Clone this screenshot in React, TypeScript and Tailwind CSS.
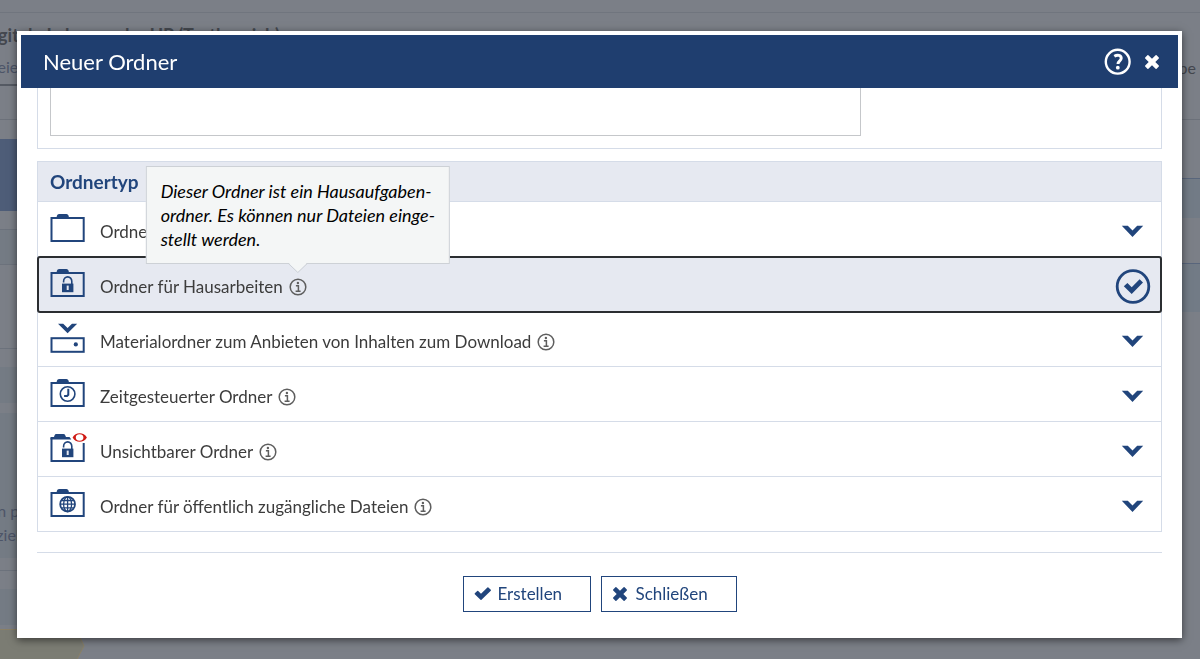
import type { ReactNode } from "react";

function Folder({ children }: { children?: ReactNode }) {
  return (
    <svg className="h-10 w-9.5 shrink-0" viewBox="0 0 38 40" fill="none" aria-hidden="true">
      <path d="M6.5 6.5 7 4.6Q7.4 3 9 3h7.5Q18 3 18.5 4.6L19 6.5z" fill="#21457c" />
      <rect x="1.5" y="7" width="32.2" height="23" stroke="#21457c" strokeWidth="2" />
      {children}
    </svg>
  );
}

function Lock() {
  return (
    <g>
      <path d="M13.6 16.5v-1.3a4.1 4.3 0 0 1 8.2 0V18" stroke="#21457c" strokeWidth="1.6" fill="none" />
      <rect x="12" y="17.6" width="11.4" height="8.6" fill="#21457c" />
      <rect x="16.7" y="19.6" width="2" height="4.4" fill="#e6e9f1" />
    </g>
  );
}

function LockFolder() {
  return (
    <Folder>
      <Lock />
    </Folder>
  );
}

function TrayIcon() {
  return (
    <svg className="h-10 w-9.5 shrink-0" viewBox="0 0 38 40" fill="none" aria-hidden="true">
      <path d="M8 2.8h5.2L17.6 7.1 22 2.8h5.2L17.6 12.3z" fill="#21457c" />
      <rect x="1.5" y="17.2" width="32.2" height="13.6" stroke="#21457c" strokeWidth="2" />
      <circle cx="25.8" cy="23.4" r="2.1" fill="#21457c" />
    </svg>
  );
}

function ClockFolder() {
  return (
    <Folder>
      <circle cx="17.6" cy="18" r="7.3" stroke="#21457c" strokeWidth="1.6" />
      <path d="M18.3 12.8v6l-1.2 1.2h-3" stroke="#21457c" strokeWidth="2" />
    </Folder>
  );
}

function HiddenFolder() {
  return (
    <svg className="h-10 w-9.5 shrink-0" viewBox="0 0 38 40" fill="none" aria-hidden="true">
      <path d="M.5 6H4l.6-1.8Q5 3 6.3 3h7.2q1.3 0 1.7 1.2L16 6h3.5l1.8 2.4H.5z" fill="#21457c" />
      <path d="M1.5 7v23H33.7V12" stroke="#21457c" strokeWidth="2" />
      <Lock />
      <path
        fillRule="evenodd"
        d="M22.6 6.5C24.3 3.5 26.6 2.2 29.6 2.2S35.2 3.5 36.9 6.5C35.2 9.5 32.6 10.8 29.6 10.8S24.3 9.5 22.6 6.5zM29.6 3.2C26.8 3.2 25.8 4.6 25.8 6.5S26.8 9.8 29.6 9.8 33.4 8.4 33.4 6.5 32.4 3.2 29.6 3.2z"
        fill="#cf1a14"
      />
    </svg>
  );
}

function GlobeFolder() {
  return (
    <Folder>
      <g stroke="#21457c" strokeWidth="1.3">
        <circle cx="17.6" cy="18.2" r="7.4" strokeWidth="1.8" />
        <ellipse cx="17.6" cy="18.2" rx="4" ry="7.4" />
        <path d="M17.6 11v15M10.3 18.2h14.6M11.4 14.5h12.4M11.4 21.9h12.4" />
      </g>
    </Folder>
  );
}

function Chevron() {
  return (
    <svg className="h-3 w-6" viewBox="0 0 24 12" aria-hidden="true">
      <path d="M.8 .8h6L11.5 5.4l4.7-4.6h6L11.5 12z" fill="#21457c" />
    </svg>
  );
}

function Selected() {
  return (
    <svg className="size-9" viewBox="0 0 36 36" fill="none" aria-hidden="true">
      <circle cx="18" cy="18.5" r="15.8" stroke="#21457c" strokeWidth="2.8" />
      <path d="M8.8 18.3l3.6-3.4 4.3 4.4 7.9-8 3.4 3.3L16.7 26.1z" fill="#21457c" />
    </svg>
  );
}

function Info() {
  return (
    <svg className="size-4.5" viewBox="0 0 18 18" fill="none" aria-hidden="true">
      <circle cx="9" cy="9" r="7.8" stroke="#5e5e5e" strokeWidth="1.5" />
      <circle cx="8.9" cy="5" r="1.2" fill="#5e5e5e" />
      <path d="M6.9 7.7h2.5v5.2M6.6 13.2h5" stroke="#5e5e5e" strokeWidth="1.5" />
    </svg>
  );
}

function Cross({ className }: { className: string }) {
  return (
    <svg className={className} viewBox="0 0 16 16" aria-hidden="true">
      <path
        d="M4.4 1.2 8 4.7l3.6-3.5q.5-.4 1 0l2.2 2.2q.4.5 0 1L11.3 8l3.5 3.6q.4.5 0 1l-2.2 2.2q-.5.4-1 0L8 11.3l-3.6 3.5q-.5.4-1 0L1.2 12.6q-.4-.5 0-1L4.7 8 1.2 4.4q-.4-.5 0-1L3.4 1.2q.5-.4 1 0z"
        fill="currentColor"
      />
    </svg>
  );
}

function Check() {
  return (
    <svg className="h-4 w-4.5" viewBox="0 0 18 16" aria-hidden="true">
      <path
        d="M.8 7.3 3.2 5q.5-.4 1 0L7 7.8l6.4-6.4q.5-.4 1 0l2.4 2.4q.4.5 0 1L7.5 13.8q-.5.4-1 0L.8 8.3q-.4-.5 0-1z"
        fill="currentColor"
      />
    </svg>
  );
}

type FolderType = {
  label: string;
  icon: ReactNode;
  info?: boolean;
  selected?: boolean;
};

const folderTypes: FolderType[] = [
  { label: "Ordner", icon: <Folder /> },
  { label: "Ordner für Hausarbeiten", icon: <LockFolder />, info: true, selected: true },
  { label: "Materialordner zum Anbieten von Inhalten zum Download", icon: <TrayIcon />, info: true },
  { label: "Zeitgesteuerter Ordner", icon: <ClockFolder />, info: true },
  { label: "Unsichtbarer Ordner", icon: <HiddenFolder />, info: true },
  { label: "Ordner für öffentlich zugängliche Dateien", icon: <GlobeFolder />, info: true },
];

function Tooltip() {
  return (
    <div
      role="tooltip"
      className="absolute bottom-full left-1/2 z-10 mb-3 -translate-x-1/2 border border-[#cdd1d6] bg-[#f4f6f6] px-3.5 py-3 text-left text-lg leading-6 whitespace-nowrap text-black italic"
    >
      Dieser Ordner ist ein Hausaufgaben-
      <br />
      ordner. Es können nur Dateien einge-
      <br />
      stellt werden.
      <svg className="absolute top-full left-1/2 h-2.5 w-5 -translate-x-1/2" viewBox="0 0 20 10" aria-hidden="true">
        <path d="M0 -1 10 9 20 -1z" fill="#f4f6f6" />
        <path d="M0 0 10 9.5 20 0" fill="none" stroke="#cdd1d6" />
      </svg>
    </div>
  );
}

function TypeRow({ type }: { type: FolderType }) {
  return (
    <li
      className={
        type.selected
          ? "relative flex h-[55px] items-center rounded-xs border-b border-[#d5dce8] bg-[#e6e9f1] pt-1 pr-2.5 pl-3 outline-2 -outline-offset-1 outline-[#2b2e31]"
          : "flex h-[55px] items-center border-b border-[#d5dce8] pt-1 pr-4 pl-3 last:h-[54px] last:border-b-0"
      }
    >
      <button type="button" className="flex items-center gap-3 text-left text-[17px] leading-6 text-[#3c3c3c]">
        {type.icon}
        <span className="pt-0.5">{type.label}</span>
      </button>
      {type.info && (
        <button type="button" aria-label={"Info: " + type.label} className="relative ml-1.5 pt-0.5">
          <Info />
          {type.selected && <Tooltip />}
        </button>
      )}
      <button type="button" aria-label={type.label + " auswählen"} className="ml-auto">
        {type.selected ? <Selected /> : <Chevron />}
      </button>
    </li>
  );
}

function Backdrop() {
  return (
    <div aria-hidden="true" className="flex h-screen flex-col overflow-hidden bg-[#7b7f87] text-[#4d5568]">
      <div className="h-[13px] shrink-0 border-b border-[#70757e]" />
      <div className="-ml-5 pt-2.5 text-lg leading-6 font-bold whitespace-nowrap text-[#44484f]">
        Digitale Lehre an der UP (Testbereich)
      </div>
      <div className="flex h-[73px] shrink-0 justify-between border-b border-[#6c717a] pt-2 text-base">
        <span className="-ml-7 h-[31px] border-b-2 border-[#555a63] pr-2">Dateien</span>
        <span className="pt-px pr-1 text-[#44474e]">Hilfe be</span>
      </div>
      <div className="flex min-h-0 flex-1 justify-between">
        <div className="w-24 shrink-0">
          <div className="mt-[19px] h-[72px] bg-[#4e5d78]" />
          <div className="mt-[18px] h-9 border-y border-[#6c727c] bg-[#747b84]" />
          <div className="mt-[83px] h-[19px] border-t border-[#6c727c]" />
          <div className="h-9 bg-[#747b84]" />
          <div className="mt-2.5 h-[145px] bg-[#747b84] pt-[86px] leading-6 whitespace-nowrap">
            <p className="-ml-6">dein persönlich</p>
            <p className="-ml-7">speziell</p>
          </div>
          <div className="mt-3 h-[19px] border-t border-[#6c727c]" />
          <div className="h-9 bg-[#747b84]" />
          <svg className="mt-1 h-8 w-[85px]" viewBox="0 0 85 32" preserveAspectRatio="none">
            <path d="M-1 .5H76L84 17 76 32H-1z" fill="#7b7c73" stroke="#8a8067" />
          </svg>
        </div>
        <div className="w-16">
          <div className="mt-[58px] h-10 border-t border-[#59667c] bg-[#727b86]" />
          <div className="mt-[45px] h-[49px] border-t border-[#59667c] bg-[#727b86]" />
        </div>
      </div>
    </div>
  );
}

export default function App() {
  return (
    <div className="min-h-screen font-['Lato',sans-serif]">
      <Backdrop />
      <div className="fixed inset-0 overflow-auto pt-[31px] pr-[18px] pl-[17px]">
        <div
          role="dialog"
          aria-labelledby="dialog-title"
          className="border-4 border-white bg-white shadow-[0_2px_8px_rgba(0,0,0,0.55)]"
        >
          <header className="flex h-[53px] items-center justify-between bg-[#1f3e6f] pr-4.5 pl-5.5 text-white">
            <h1 id="dialog-title" className="text-[22px] leading-7">
              Neuer Ordner
            </h1>
            <div className="flex items-center gap-3">
              <button type="button" aria-label="Hilfe">
                <svg className="size-7" viewBox="0 0 28 28" fill="none" aria-hidden="true">
                  <circle cx="13.7" cy="13.7" r="11.9" stroke="white" strokeWidth="2.4" />
                  <path
                    d="M10.3 8.3C13.5 6.5 17.2 7.1 17.2 10.2c0 2.6-3.2 2.6-3.2 5.8"
                    stroke="white"
                    strokeWidth="3"
                  />
                  <circle cx="13.8" cy="19.7" r="1.9" fill="white" />
                </svg>
              </button>
              <button type="button" aria-label="Dialog schließen">
                <Cross className="size-4" />
              </button>
            </div>
          </header>
          <div className="px-4">
            <div className="border-x border-b border-[#d5dce8] pb-3 pl-3">
              <textarea
                aria-label="Beschreibung"
                className="block h-12 w-[73%] resize-none border border-t-0 border-[#c5c7ca] bg-white outline-none"
              />
            </div>
            <section className="mt-3 border border-[#d5dce8]">
              <h2 className="h-10 border-b border-[#d5dce8] bg-[#e6e9f1] pl-3 text-[19px] leading-10 font-bold text-[#21457c]">
                Ordnertyp
              </h2>
              <ul>
                {folderTypes.map((type) => (
                  <TypeRow key={type.label} type={type} />
                ))}
              </ul>
            </section>
            <footer className="mt-5 flex justify-center gap-2.5 border-t border-[#d5dce8] pt-[23px] pb-[22px]">
              <button
                type="button"
                className="flex h-9 w-32 items-center gap-1.5 border border-[#21457c] px-2.5 text-[17px] leading-6 text-[#21457c]"
              >
                <Check />
                Erstellen
              </button>
              <button
                type="button"
                className="flex h-9 w-34 items-center gap-2 border border-[#21457c] px-2.5 text-[17px] leading-6 text-[#21457c]"
              >
                <Cross className="size-4" />
                Schließen
              </button>
            </footer>
          </div>
        </div>
      </div>
    </div>
  );
}
